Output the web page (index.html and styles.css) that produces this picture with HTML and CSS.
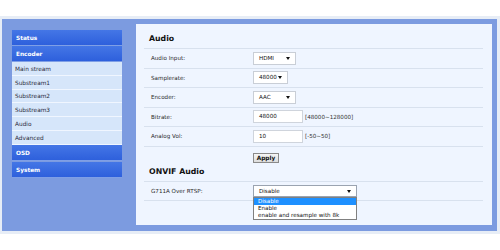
FILE: index.html
```html
<!DOCTYPE html>
<html>
<head>
<meta charset="utf-8">
<link rel="stylesheet" href="styles.css">
</head>
<body>
<div class="frame">
  <nav class="sidebar">
    <div class="menu-head">Status</div>
    <div class="menu-head">Encoder</div>
    <div class="menu-sub">Main stream</div>
    <div class="menu-sub">Substream1</div>
    <div class="menu-sub">Substream2</div>
    <div class="menu-sub">Substream3</div>
    <div class="menu-sub">Audio</div>
    <div class="menu-sub">Advanced</div>
    <div class="menu-head">OSD</div>
    <div class="menu-head">System</div>
  </nav>
  <main class="panel">
    <h2 class="sec-title">Audio</h2>
    <div class="row"><span class="label">Audio Input:</span><span class="select w43">HDMI</span></div>
    <div class="row"><span class="label">Samplerate:</span><span class="select w35">48000</span></div>
    <div class="row"><span class="label">Encoder:</span><span class="select w43">AAC</span></div>
    <div class="row"><span class="label">Bitrate:</span><span class="field"><span class="input">48000</span><span class="range">[48000~128000]</span></span></div>
    <div class="row"><span class="label">Analog Vol:</span><span class="field"><span class="input">10</span><span class="range">[-50~50]</span></span></div>
    <div class="apply-row"><button class="btn">Apply</button></div>
    <h2 class="sec-title second">ONVIF Audio</h2>
    <div class="row"><span class="label">G711A Over RTSP:</span>
      <div class="dd-wrap">
        <span class="select w104 focus">Disable</span>
        <ul class="dd-list">
          <li class="dd-opt selected">Disable</li>
          <li class="dd-opt">Enable</li>
          <li class="dd-opt">enable and resample with 8k</li>
        </ul>
      </div>
    </div>
  </main>
</div>
</body>
</html>
```
FILE: styles.css
```css
html, body {
  margin: 0;
  padding: 0;
  background: #ffffff;
}
body {
  padding-top: 16px;
  font-family: "DejaVu Sans", Verdana, sans-serif;
}
.frame {
  width: 500px;
  height: 218px;
  box-sizing: border-box;
  border: 3px solid #e7edf6;
  border-left-width: 2px;
  background: #7c9be0;
  display: flex;
  align-items: flex-start;
  padding: 5px 5px 6px 10px;
  gap: 14px;
}
.sidebar {
  width: 110px;
  margin-top: 6px;
  display: flex;
  flex-direction: column;
}
.menu-head {
  height: 14px;
  line-height: 14px;
  padding-top: 1px;
  border-bottom: 1px solid #7f9fe6;
  background: linear-gradient(#4476e6, #2e60dc);
  color: #ffffff;
  font-weight: bold;
  font-size: 5.8px;
  padding-left: 4px;
}
.menu-sub {
  height: 12px;
  line-height: 12px;
  padding-top: 0.8px;
  border-bottom: 1px solid #f0f6ff;
  background: #d6e6fa;
  color: #2a2a3a;
  font-size: 5.8px;
  padding-left: 3px;
}
.menu-head + .menu-head:last-child {
  margin-top: 1px;
}
.panel {
  flex: 1;
  height: 201px;
  box-sizing: border-box;
  background: #eff5ff;
  padding: 0 9px 0 8px;
  position: relative;
}
.sec-title {
  margin: 0;
  padding: 9px 0 3px 5px;
  font-size: 7.8px;
  line-height: 12px;
  font-weight: bold;
  color: #111111;
  border-bottom: 1px solid #d8e1ee;
}
.sec-title.second {
  padding-top: 0;
}
.row {
  display: grid;
  grid-template-columns: 109px auto;
  align-items: center;
  height: 18.5px;
  border-bottom: 1px solid #d8e1ee;
  font-size: 5.6px;
  color: #2a2a2a;
}
.label {
  padding-left: 7px;
}
.select {
  position: relative;
  display: block;
  height: 13px;
  line-height: 11px;
  box-sizing: border-box;
  background: #ffffff;
  border: 1px solid #c9ced6;
  padding-left: 5px;
  font-size: 5.6px;
  color: #111111;
}
.select::after {
  content: "";
  position: absolute;
  right: 5px;
  top: 4px;
  border-left: 2px solid transparent;
  border-right: 2px solid transparent;
  border-top: 3px solid #111111;
}
.w43 { width: 43px; }
.w35 { width: 35px; }
.w104 { width: 104px; height: 12px; line-height: 10px; }
.select.focus { border-color: #9aa3b0; }
.field {
  display: flex;
  align-items: center;
}
.input {
  display: block;
  width: 50px;
  height: 13px;
  line-height: 11px;
  box-sizing: border-box;
  background: #ffffff;
  border: 1px solid #cfd4dc;
  padding-left: 5px;
  color: #111111;
}
.range {
  margin-left: 2px;
  color: #333333;
}
.apply-row {
  padding: 6px 0 3px 109px;
  height: 10px;
}
.btn {
  display: block;
  margin: 0;
  width: 26px;
  height: 10px;
  padding: 0;
  box-sizing: border-box;
  border: 1px solid #8a8a8a;
  background: linear-gradient(#f6f6f6, #dcdcdc);
  font-family: "DejaVu Sans", Verdana, sans-serif;
  font-size: 5.8px;
  font-weight: bold;
  line-height: 8px;
  color: #111111;
}
.dd-wrap {
  position: relative;
}
.dd-list {
  position: absolute;
  left: 0;
  top: 12px;
  width: 104px;
  margin: 0;
  padding: 0;
  list-style: none;
  box-sizing: border-box;
  background: #ffffff;
  border: 1px solid #808080;
  z-index: 2;
}
.dd-opt {
  height: 7.2px;
  line-height: 7.2px;
  padding-left: 4px;
  font-size: 5.6px;
  color: #111111;
  white-space: nowrap;
}
.dd-opt.selected {
  background: #1e90ff;
  color: #ffffff;
}
```
